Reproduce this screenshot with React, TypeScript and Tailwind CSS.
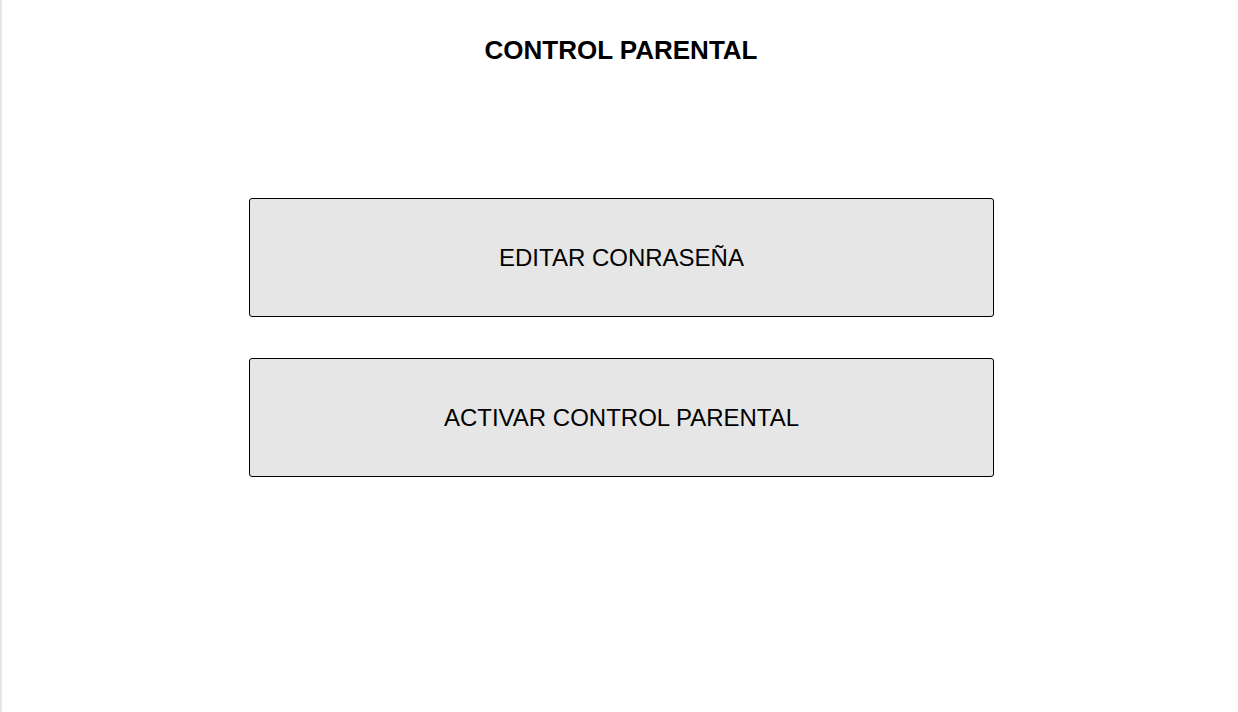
const options = ['EDITAR CONRASEÑA', 'ACTIVAR CONTROL PARENTAL'];

const App = () => {
  return (
    <div className="min-h-[712px] border-l-2 border-[#e5e5e5] bg-white font-['Liberation_Sans',Arial,sans-serif] text-black">
      <h1 className="pt-[34px] pl-[2px] text-center text-[26px] font-bold leading-[32px]">
        CONTROL PARENTAL
      </h1>
      {/* opciones */}
      <div className="mt-[132px] flex flex-col items-center gap-[41px] pl-[3px]">
        {options.map((label) => (
          <button
            key={label}
            className="flex h-[119px] w-[745px] items-center justify-center rounded-[3px] border border-black bg-[#e6e6e6] text-[24px]"
          >
            {label}
          </button>
        ))}
      </div>
    </div>
  );
};

export default App;
